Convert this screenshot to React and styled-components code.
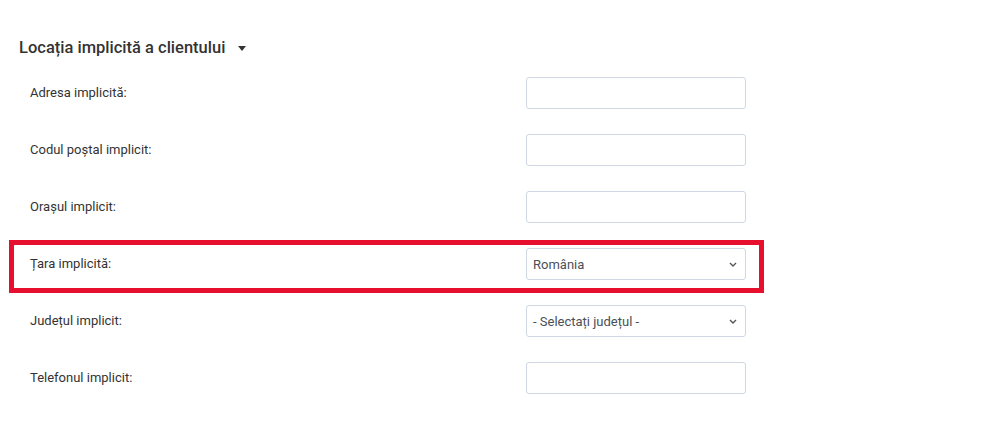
import React from 'react';
import styled, { createGlobalStyle } from 'styled-components';

const GlobalStyle = createGlobalStyle`
    body {
        margin: 0;
        background: #ffffff;
        font-family: Roboto, "Liberation Sans", sans-serif;
        color: #333333;
    }
`;

const Page = styled.div`
    padding: 35px 0 0 19px;
`;

const SectionTitle = styled.h2`
    display: flex;
    align-items: center;
    gap: 13px;
    margin: 0;
    height: 24px;
    font-size: 16.5px;
    font-weight: 500;
    color: #333333;
`;

const Caret = styled.span`
    width: 0;
    height: 0;
    border-left: 4.5px solid transparent;
    border-right: 4.5px solid transparent;
    border-top: 5px solid #333333;
    margin-top: 2px;
`;

const Form = styled.div`
    margin-top: 18px;
    display: flex;
    flex-direction: column;
`;

const Row = styled.div`
    position: relative;
    display: grid;
    grid-template-columns: 496px 220px;
    align-items: start;
    width: 716px;
    height: 57px;
    padding-left: 11px;

    &::before {
        content: '';
        display: ${props => (props.$highlight ? 'block' : 'none')};
        position: absolute;
        top: -8px;
        left: -10px;
        right: -18px;
        height: 53px;
        border: 5px solid #e6102e;
        box-sizing: border-box;
        pointer-events: none;
    }
`;

const Label = styled.label`
    font-size: 13px;
    line-height: 32px;
    color: #333333;
`;

const TextInput = styled.input`
    box-sizing: border-box;
    width: 220px;
    height: 32px;
    border: 1px solid #cfd8e2;
    border-radius: 3px;
    background: #ffffff;
    padding: 0 6px;
    font: 13px Roboto, "Liberation Sans", sans-serif;
    outline: none;
`;

const SelectBox = styled.div`
    box-sizing: border-box;
    width: 220px;
    height: 32px;
    border: 1px solid #cfd8e2;
    border-radius: 3px;
    background: #ffffff;
    padding: 0 8px 0 6px;
    display: flex;
    align-items: center;
    justify-content: space-between;
    font-size: 13px;
    color: #495057;
`;

const Chevron = () => (
    <svg width="8" height="5" viewBox="0 0 8 5" fill="none">
        <path d="M1 1l3 3 3-3" stroke="#555" strokeWidth="1.4" />
    </svg>
);

const fields = [
    { label: 'Adresa implicită:' },
    { label: 'Codul poștal implicit:' },
    { label: 'Orașul implicit:' },
    { label: 'Țara implicită:', select: 'România', highlight: true },
    { label: 'Județul implicit:', select: '- Selectați județul -' },
    { label: 'Telefonul implicit:' }
];

export default function App() {
    return (
        <Page>
            <GlobalStyle />
            <SectionTitle>
                Locația implicită a clientului
                <Caret />
            </SectionTitle>
            <Form>
                {fields.map(f => (
                    <Row key={f.label} $highlight={f.highlight}>
                        <Label>{f.label}</Label>
                        {f.select ? (
                            <SelectBox>
                                <span>{f.select}</span>
                                <Chevron />
                            </SelectBox>
                        ) : (
                            <TextInput type="text" />
                        )}
                    </Row>
                ))}
            </Form>
        </Page>
    );
}
